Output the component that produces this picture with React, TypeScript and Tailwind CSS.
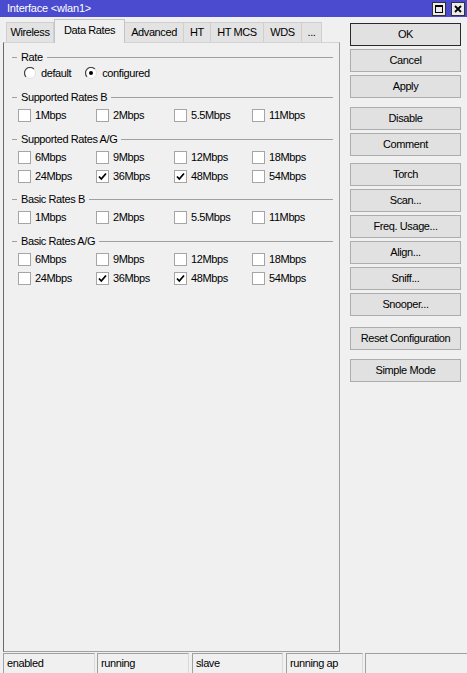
import React from 'react';

const rows = {
  supB: [['1Mbps', false], ['2Mbps', false], ['5.5Mbps', false], ['11Mbps', false]],
  supAG: [
    ['6Mbps', false], ['9Mbps', false], ['12Mbps', false], ['18Mbps', false],
    ['24Mbps', false], ['36Mbps', true], ['48Mbps', true], ['54Mbps', false],
  ],
  basB: [['1Mbps', false], ['2Mbps', false], ['5.5Mbps', false], ['11Mbps', false]],
  basAG: [
    ['6Mbps', false], ['9Mbps', false], ['12Mbps', false], ['18Mbps', false],
    ['24Mbps', false], ['36Mbps', true], ['48Mbps', true], ['54Mbps', false],
  ],
} as Record<string, [string, boolean][]>;

function Header({ title, className }: { title: string; className: string }) {
  return (
    <div className={`flex items-center h-[18px] ${className}`}>
      <div className="ml-[8px] w-[5px] h-px bg-[#a0a0a0]" />
      <span className="px-[4px]">{title}</span>
      <div className="flex-1 mr-[6px] h-px bg-[#a0a0a0]" />
    </div>
  );
}

function Check({ on }: { on: boolean }) {
  return (
    <div className="w-[13px] h-[13px] bg-white border border-[#a5a5a5] flex items-center justify-center">
      {on && (
        <svg width="11" height="11" viewBox="0 0 11 11">
          <path d="M2 5.5 L4.3 8 L9 2.5" stroke="#000" strokeWidth="1.8" fill="none" />
        </svg>
      )}
    </div>
  );
}

function Radio({ on }: { on: boolean }) {
  return (
    <svg width="12" height="12" viewBox="0 0 12 12">
      <circle cx="6" cy="6" r="5.5" fill="#fff" />
      <path d="M2.1 9.9 A5.5 5.5 0 0 1 9.9 2.1" stroke="#404040" strokeWidth="1.2" fill="none" />
      <path d="M9.9 2.1 A5.5 5.5 0 0 1 2.1 9.9" stroke="#e0e0e0" strokeWidth="1" fill="none" />
      {on && <circle cx="6" cy="6" r="2" fill="#000" />}
    </svg>
  );
}

function Grid({ items }: { items: [string, boolean][] }) {
  return (
    <div className="pl-[14px] grid grid-cols-[78px_78px_78px_78px]">
      {items.map(([label, on], i) => (
        <div key={i} className="h-[19px] flex items-center">
          <Check on={on} />
          <span className="ml-[4px]">{label}</span>
        </div>
      ))}
    </div>
  );
}

function Btn({ label, className, def }: { label: string; className: string; def?: boolean }) {
  return (
    <div
      className={`h-[23px] w-[111px] bg-[#e1e1e1] border flex items-center justify-center ${
        def ? 'border-[#2a2a2a]' : 'border-[#adadad]'
      } ${className}`}
    >
      {label}
    </div>
  );
}

const tabs = ['Wireless', 'Data Rates', 'Advanced', 'HT', 'HT MCS', 'WDS', '...'];
const tabW = ['w-[48px]', 'w-[71px]', 'w-[60px]', 'w-[28px]', 'w-[54px]', 'w-[39px]', 'w-[21px]'];

export default function App() {
  return (
    <div className="w-[467px] h-[673px] bg-[#f0f0f0] flex flex-col overflow-hidden font-['Liberation_Sans',Arial,sans-serif] text-[11px] tracking-[-0.4px] text-black">
      {/* title bar */}
      <div className="h-[17px] bg-[#4b4bcf] flex items-center text-white">
        <span className="pl-[7px] tracking-[-0.2px]">Interface &lt;wlan1&gt;</span>
        <div className="ml-auto mr-[2px] flex gap-[5px]">
          <div className="w-[14px] h-[14px] bg-[#ececec] border border-[#333] flex items-center justify-center">
            <div className="w-[8px] h-[8px] border border-black border-t-2" />
          </div>
          <div className="w-[14px] h-[14px] bg-[#ececec] border border-[#333] flex items-center justify-center">
            <svg width="8" height="8" viewBox="0 0 8 8">
              <path d="M1 1 L7 7 M7 1 L1 7" stroke="#000" strokeWidth="1.8" />
            </svg>
          </div>
        </div>
      </div>

      <div className="flex flex-1 min-h-0">
        <div className="ml-[3px] w-[337px] flex flex-col">
          <div className="h-[25px] flex items-end pl-[4px]">
            {tabs.map((t, i) =>
              i === 1 ? (
                <div
                  key={t}
                  className={`${tabW[i]} h-[24px] -mb-px relative z-10 bg-[#f0f0f0] border-l border-r border-t border-[#c4c4c4] flex items-center justify-center pb-[2px]`}
                >
                  {t}
                </div>
              ) : (
                <div
                  key={t}
                  className={`${tabW[i]} h-[20px] bg-[#e3e3e3] border-l border-r border-t border-[#cfcfcf] -ml-px flex items-center justify-center`}
                >
                  {t}
                </div>
              )
            )}
          </div>
          <div className="flex-1 border-t border-t-[#d4d4d4] border-l border-l-[#6a6a6a] border-r border-r-[#a0a0a0] border-b border-b-[#a0a0a0]">
            <Header title="Rate" className="mt-[5px]" />
            <div className="h-[14px] flex items-center">
              <div className="ml-[20px]">
                <Radio on={false} />
              </div>
              <span className="ml-[5px]">default</span>
              <div className="ml-[14px]">
                <Radio on={true} />
              </div>
              <span className="ml-[5px]">configured</span>
            </div>

            <Header title="Supported Rates B" className="mt-[8px]" />
            <Grid items={rows.supB} />

            <Header title="Supported Rates A/G" className="mt-[5px]" />
            <Grid items={rows.supAG} />

            <Header title="Basic Rates B" className="mt-[4px]" />
            <Grid items={rows.basB} />

            <Header title="Basic Rates A/G" className="mt-[5px]" />
            <Grid items={rows.basAG} />
          </div>
        </div>

        <div className="ml-[10px] w-[111px] pt-[6px] flex flex-col">
          <Btn label="OK" className="" def />
          <Btn label="Cancel" className="mt-[3px]" />
          <Btn label="Apply" className="mt-[3px]" />
          <Btn label="Disable" className="mt-[9px]" />
          <Btn label="Comment" className="mt-[3px]" />
          <Btn label="Torch" className="mt-[7px]" />
          <Btn label="Scan..." className="mt-[3px]" />
          <Btn label="Freq. Usage..." className="mt-[3px]" />
          <Btn label="Align..." className="mt-[3px]" />
          <Btn label="Sniff..." className="mt-[3px]" />
          <Btn label="Snooper..." className="mt-[3px]" />
          <Btn label="Reset Configuration" className="mt-[11px]" />
          <Btn label="Simple Mode" className="mt-[9px]" />
        </div>
      </div>

      {/* status bar */}
      <div className="h-[20px] mt-[1px] flex">
        <div className="ml-[3px] w-[92px] border-l border-t border-[#a0a0a0] border-r border-r-[#dadada] flex items-center pl-[3px]">enabled</div>
        <div className="ml-[2px] w-[92px] border-l border-t border-[#a0a0a0] border-r border-r-[#dadada] flex items-center pl-[3px]">running</div>
        <div className="ml-[3px] w-[91px] border-l border-t border-[#a0a0a0] border-r border-r-[#dadada] flex items-center pl-[3px]">slave</div>
        <div className="ml-[3px] w-[77px] border-l border-t border-[#a0a0a0] border-r border-r-[#dadada] flex items-center pl-[3px]">running ap</div>
        <div className="ml-[2px] flex-1 border-l border-t border-[#a0a0a0] flex items-center pl-[3px]" />
      </div>
    </div>
  );
}
